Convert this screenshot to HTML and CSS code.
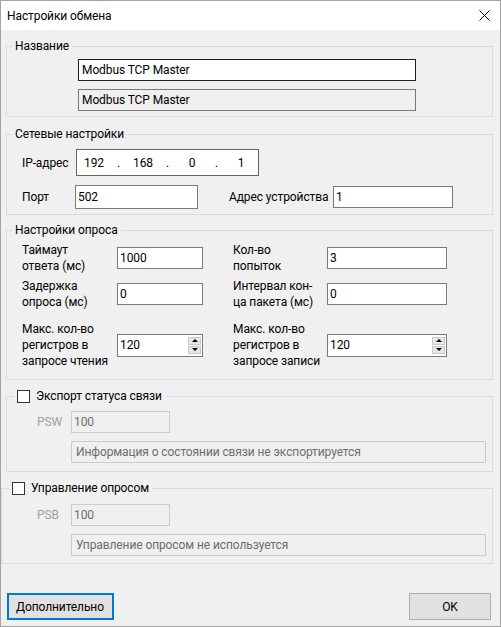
FILE: index.html
```html
<!DOCTYPE html>
<html lang="ru">
<head>
    <meta charset="UTF-8">
    <meta name="viewport" content="width=device-width, initial-scale=1.0">
    <title>Настройки обмена</title>
    <link rel="stylesheet" href="styles.css">
</head>
<body>

<div class="window">
    <div class="titlebar">
        <span class="title">Настройки обмена</span>
        <svg class="close" width="11" height="11" viewBox="0 0 11 11">
            <path d="M0.5 0.5 L10.5 10.5 M10.5 0.5 L0.5 10.5" stroke="#000" stroke-width="1"/>
        </svg>
    </div>

    <div class="content">
        <fieldset class="group group-name">
            <legend>Название</legend>
            <div class="group-body name-body">
                <input type="text" class="field field-focus name-field" value="Modbus TCP Master">
                <input type="text" class="field field-readonly name-field" value="Modbus TCP Master" readonly>
            </div>
        </fieldset>

        <fieldset class="group group-net">
            <legend>Сетевые настройки</legend>
            <div class="group-body net-body">
                <div class="net-row">
                    <span class="label ip-label">IP-адрес</span>
                    <div class="ip-box">
                        <span class="octet">192</span><span class="dot">.</span>
                        <span class="octet">168</span><span class="dot">.</span>
                        <span class="octet">0</span><span class="dot">.</span>
                        <span class="octet">1</span>
                    </div>
                </div>
                <div class="net-row port-row">
                    <span class="label port-label">Порт</span>
                    <input type="text" class="field port-field" value="502">
                    <span class="label addr-label">Адрес устройства</span>
                    <input type="text" class="field addr-field" value="1">
                </div>
            </div>
        </fieldset>

        <fieldset class="group group-poll">
            <legend>Настройки опроса</legend>
            <div class="group-body poll-body">
                <div class="poll-row">
                    <span class="label">Таймаут<br>ответа (мс)</span>
                    <input type="text" class="field small-field" value="1000">
                    <span class="label right-label">Кол-во<br>попыток</span>
                    <input type="text" class="field wide-field" value="3">
                </div>
                <div class="poll-row">
                    <span class="label">Задержка<br>опроса (мс)</span>
                    <input type="text" class="field small-field" value="0">
                    <span class="label right-label">Интервал кон-<br>ца пакета (мс)</span>
                    <input type="text" class="field wide-field" value="0">
                </div>
                <div class="poll-row tall-row">
                    <span class="label">Макс. кол-во<br>регистров в<br>запросе чтения</span>
                    <div class="field spin small-field">
                        <span class="spin-value">120</span>
                        <span class="spin-buttons">
                            <span class="spin-btn"><span class="arrow-up"></span></span>
                            <span class="spin-btn"><span class="arrow-down"></span></span>
                        </span>
                    </div>
                    <span class="label right-label">Макс. кол-во<br>регистров в<br>запросе записи</span>
                    <div class="field spin wide-field">
                        <span class="spin-value">120</span>
                        <span class="spin-buttons">
                            <span class="spin-btn"><span class="arrow-up"></span></span>
                            <span class="spin-btn"><span class="arrow-down"></span></span>
                        </span>
                    </div>
                </div>
            </div>
        </fieldset>

        <fieldset class="group group-check group-export">
            <legend><span class="checkbox"></span>Экспорт статуса связи</legend>
            <div class="group-body check-body">
                <div class="check-row">
                    <span class="label disabled-label">PSW</span>
                    <input type="text" class="field field-disabled reg-field" value="100" readonly>
                </div>
                <div class="info-box">Информация о состоянии связи не экспортируется</div>
            </div>
        </fieldset>

        <fieldset class="group group-check group-control">
            <legend><span class="checkbox"></span>Управление опросом</legend>
            <div class="group-body check-body">
                <div class="check-row">
                    <span class="label disabled-label">PSB</span>
                    <input type="text" class="field field-disabled reg-field" value="100" readonly>
                </div>
                <div class="info-box">Управление опросом не используется</div>
            </div>
        </fieldset>

        <div class="buttons">
            <button class="btn btn-default">Дополнительно</button>
            <button class="btn btn-ok">OK</button>
        </div>
    </div>
</div>

</body>
</html>
```

FILE: styles.css
```css
* {
    box-sizing: border-box;
}

body {
    margin: 0;
    padding: 0;
    font-family: 'Roboto', 'Noto Sans', sans-serif;
    font-size: 12px;
    letter-spacing: -0.1px;
    color: #000;
    background: #f0f0f0;
}

.window {
    width: 501px;
    height: 627px;
    border: 1px solid #a3a3a3;
    background-color: #f0f0f0;
    display: flex;
    flex-direction: column;
}

.titlebar {
    height: 29px;
    background-color: #ffffff;
    display: flex;
    align-items: center;
    justify-content: space-between;
    padding: 0 10px 0 6px;
    flex-shrink: 0;
}

.close {
    margin-top: -1px;
}

.content {
    padding: 0 7px 0 5px;
    display: flex;
    flex-direction: column;
    flex: 1;
}

/* group boxes */
.group {
    margin: 8px 0 0 0;
    padding: 0;
    border: 1px solid #dcdcdc;
    min-width: 0;
}

.group legend {
    height: 16px;
    line-height: 16px;
    padding: 0 3px;
    margin-left: 5px;
}

.group-name {
    margin-top: 8px;
}

.group-net {
    margin-top: 9px;
}

.group-poll {
    margin-top: 7px;
}

.name-body {
    padding: 5px 0 5px 71px;
}

.net-body {
    padding: 7px 0 5px 15px;
}

.poll-body {
    padding: 4px 0 10px 15px;
}

.group-check legend {
    margin-left: 7px;
    display: flex;
    align-items: center;
}

.check-body {
    padding: 7px 0 8px 30px;
}

.group-control {
    margin-left: -5px;
}

.group-control .check-body {
    padding: 8px 0 7px 35px;
}

/* fields */
.field {
    font-family: inherit;
    font-size: 12px;
    letter-spacing: inherit;
    color: #000;
    height: 22px;
    line-height: 20px;
    padding: 0 2px;
    border: 1px solid #7a7a7a;
    background-color: #ffffff;
    outline: none;
    margin: 0;
}

.field-focus {
    border-color: #1e1e1e;
}

.field-readonly {
    background-color: #f0f0f0;
}

.name-field {
    display: block;
    width: 338px;
    padding-left: 3px;
}

.name-field + .name-field {
    margin-top: 8px;
}

.label {
    line-height: 16px;
    white-space: nowrap;
}

/* network settings */
.net-row {
    display: flex;
    align-items: center;
}

.port-row {
    margin-top: 9px;
}

.ip-label {
    width: 54px;
}

.ip-box {
    width: 183px;
    height: 27px;
    border: 1px solid #646464;
    background-color: #ffffff;
    display: flex;
    align-items: center;
}

.octet {
    width: 34px;
    text-align: center;
}

.dot {
    width: 15px;
    text-align: center;
}

.port-label {
    width: 53px;
}

.port-field {
    width: 123px;
    height: 24px;
}

.addr-label {
    width: 104px;
    margin-left: 31px;
}

.addr-field {
    width: 120px;
}

/* poll settings */
.poll-row {
    display: flex;
    align-items: center;
    height: 32px;
}

.poll-row + .poll-row {
    margin-top: 4px;
}

.poll-row.tall-row {
    height: 48px;
    margin-top: 11px;
}

.poll-row .label {
    width: 95px;
}

.poll-row .right-label {
    width: 94px;
    margin-left: 30px;
}

.small-field {
    width: 86px;
}

.wide-field {
    width: 120px;
}

.spin {
    display: flex;
    align-items: center;
    justify-content: space-between;
    height: 23px;
    padding-right: 1px;
}

.spin-buttons {
    display: flex;
    flex-direction: column;
    gap: 1px;
}

.spin-btn {
    width: 13px;
    height: 8px;
    background-color: #e6e6e6;
    border: 1px solid #c8c8c8;
    display: flex;
    align-items: center;
    justify-content: center;
}

.arrow-up {
    width: 0;
    height: 0;
    border-left: 3px solid transparent;
    border-right: 3px solid transparent;
    border-bottom: 3px solid #000;
}

.arrow-down {
    width: 0;
    height: 0;
    border-left: 3px solid transparent;
    border-right: 3px solid transparent;
    border-top: 3px solid #000;
}

/* checkbox groups */
.checkbox {
    width: 13px;
    height: 13px;
    border: 1px solid #333333;
    background-color: #ffffff;
    margin-right: 6px;
}

.check-row {
    display: flex;
    align-items: center;
}

.disabled-label {
    color: #a0a0a0;
    width: 34px;
}

.field-disabled {
    background-color: #f0f0f0;
    border-color: #cccccc;
    color: #6d6d6d;
}

.reg-field {
    width: 99px;
}

.info-box {
    margin: 8px 0 0 34px;
    width: 415px;
    height: 22px;
    line-height: 20px;
    padding: 0 4px;
    border: 1px solid #cccccc;
    color: #6d6d6d;
}

/* bottom buttons */
.buttons {
    margin-top: 29px;
    display: flex;
    justify-content: space-between;
    padding: 0 2px 0 1px;
}

.btn {
    font-family: inherit;
    font-size: 12px;
    letter-spacing: inherit;
    color: #000;
    height: 27px;
    background-color: #e1e1e1;
    border: 1px solid #adadad;
    padding: 0;
    margin: 0;
}

.btn-default {
    width: 107px;
    border: 2px solid #0078d7;
    text-align: left;
    padding-left: 7px;
}

.btn-ok {
    width: 82px;
}
```
